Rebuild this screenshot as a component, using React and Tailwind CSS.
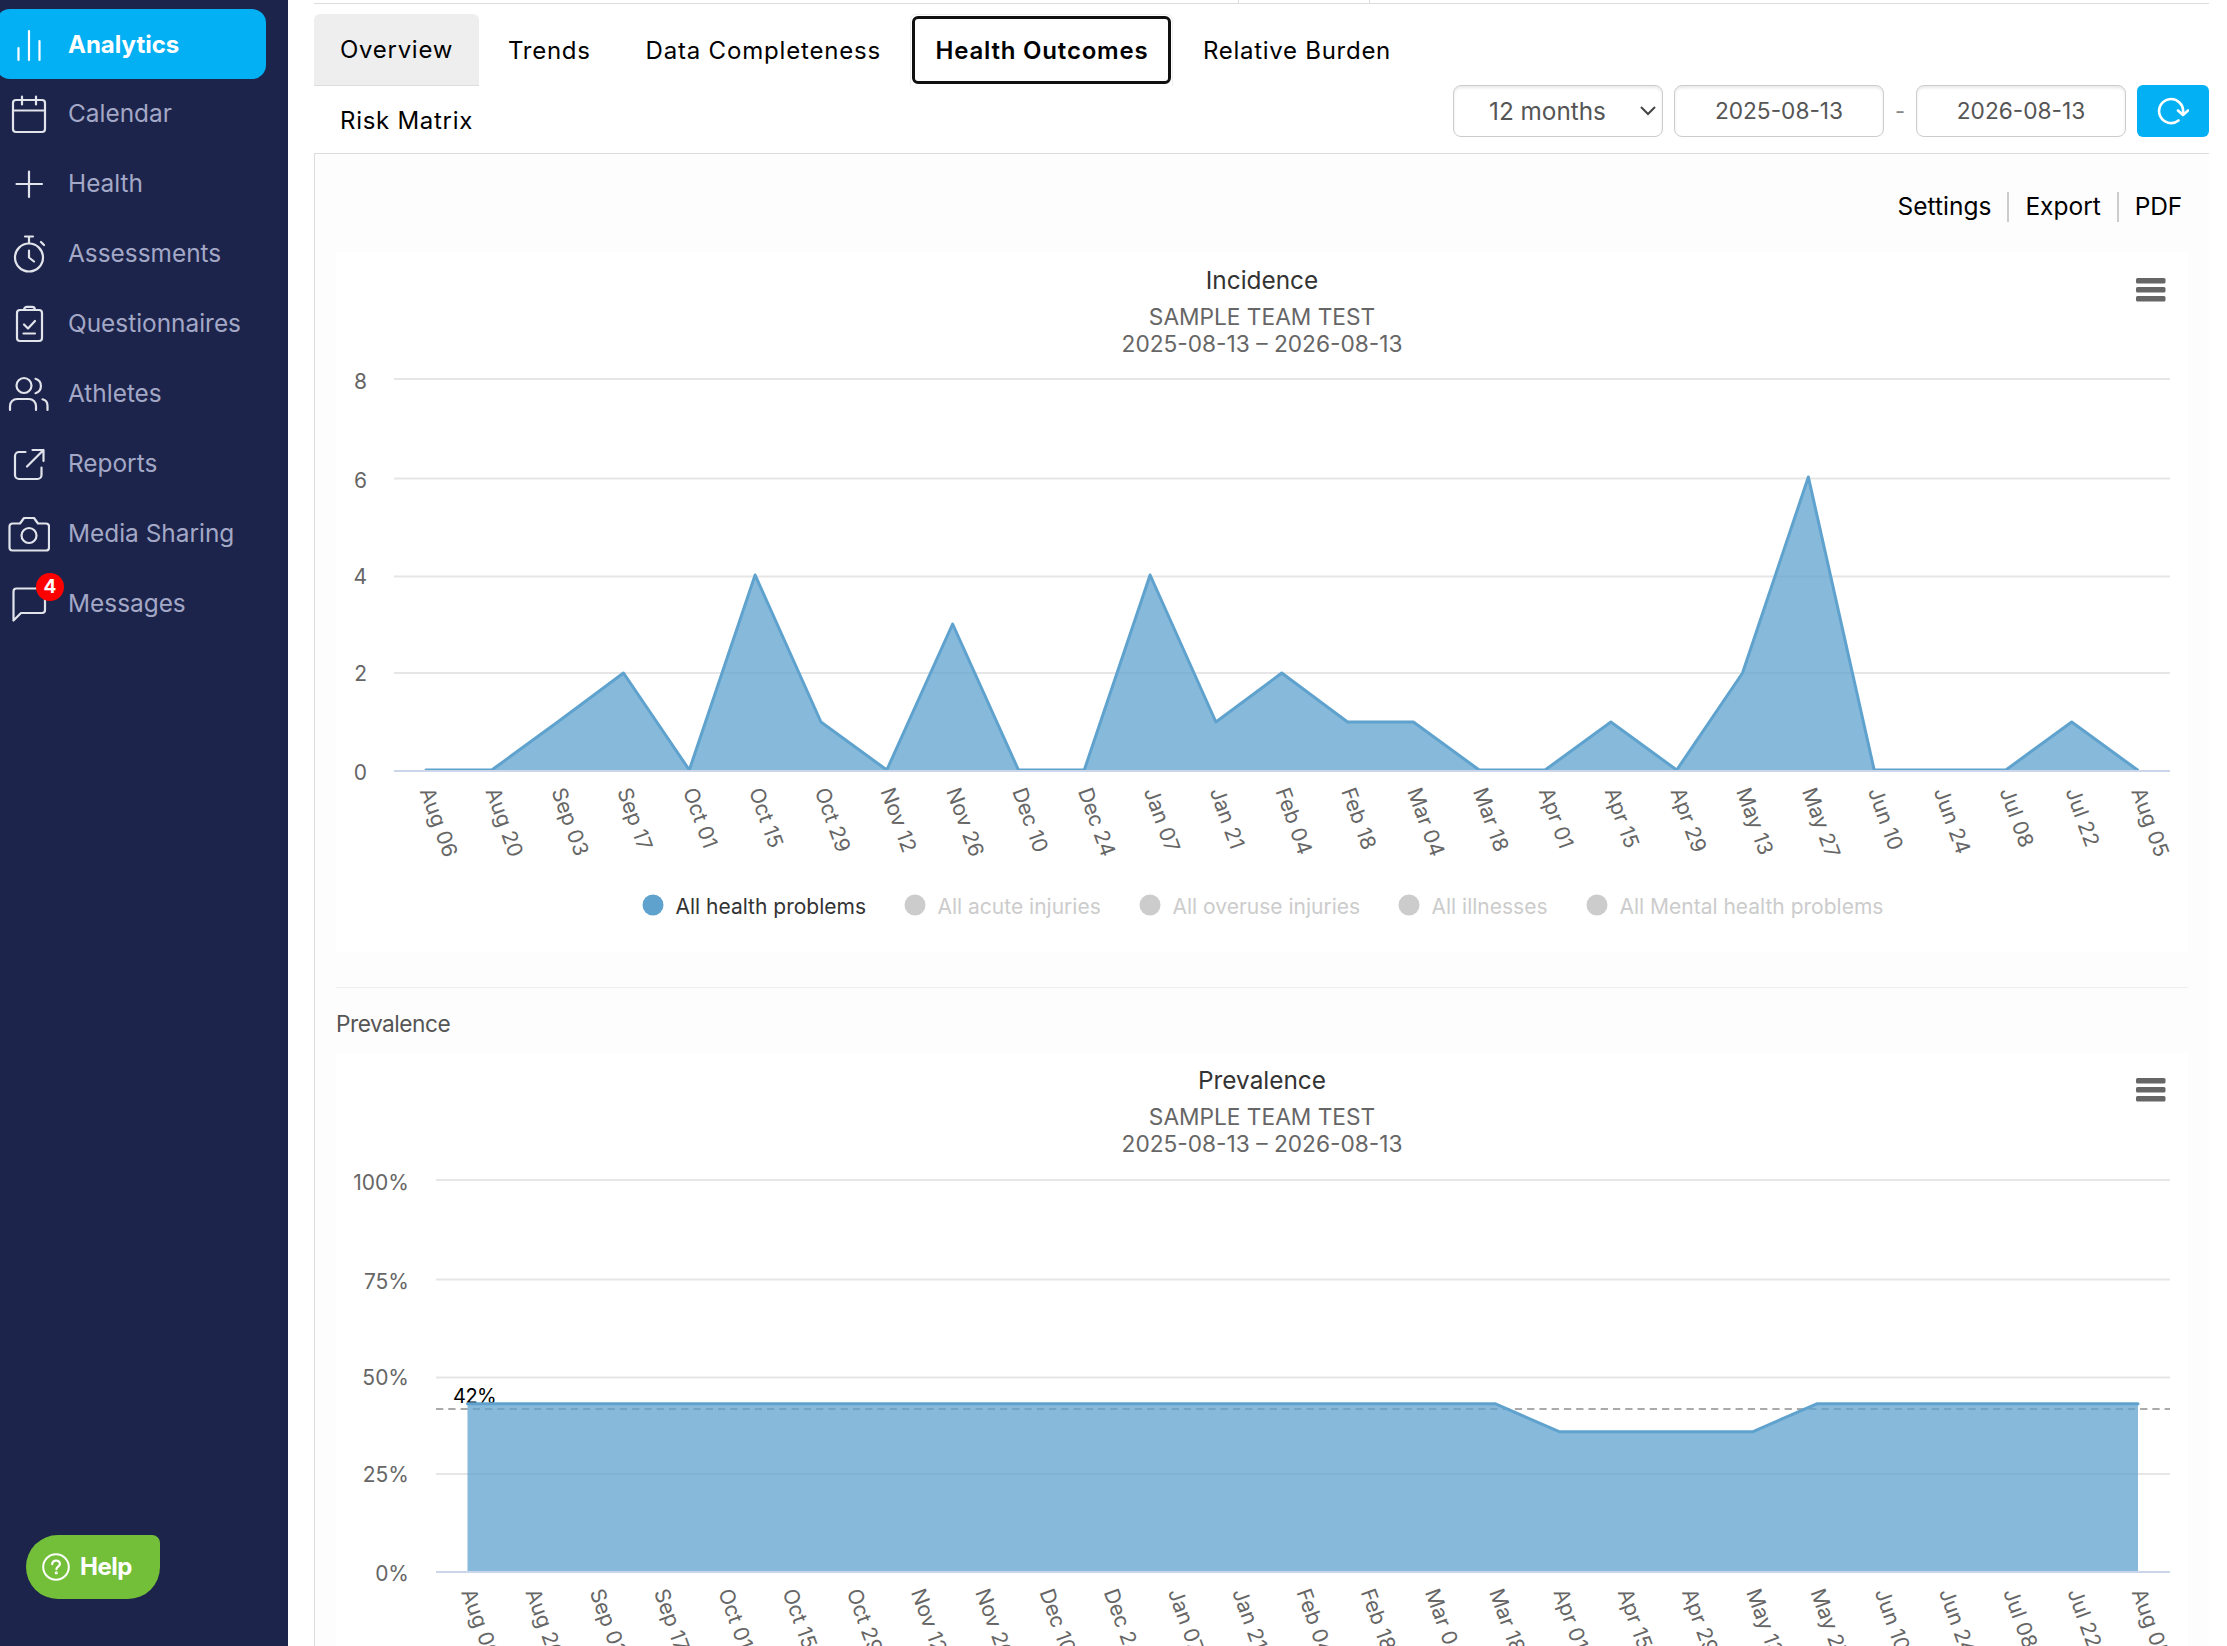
import clsx from "clsx";

const NAV = [
  { id: "analytics", label: "Analytics", active: true },
  { id: "calendar", label: "Calendar" },
  { id: "health", label: "Health" },
  { id: "assessments", label: "Assessments" },
  { id: "questionnaires", label: "Questionnaires" },
  { id: "athletes", label: "Athletes" },
  { id: "reports", label: "Reports" },
  { id: "media", label: "Media Sharing" },
  { id: "messages", label: "Messages", badge: 4 },
];

// all icons share a 42px box
const ICONS = {
  analytics: <path d="M10.5 25v12M21 8v29M31.5 18v19" />,
  calendar: (
    <>
      <rect x="5" y="7" width="32" height="32" rx="3" />
      <path d="M5 17.500h32M14 3.500v8M28 3.500v8" />
    </>
  ),
  health: <path d="M21 8.500v25.500M8.500 21h25.500" />,
  assessments: (
    <>
      <circle cx="21" cy="24.500" r="14" />
      <path d="M21 10V3.500M17 3.500h8M21 17.500v7l5 4M33 9l3 3" />
    </>
  ),
  questionnaires: (
    <>
      <rect x="9" y="7" width="25" height="31" rx="3" />
      <path d="M16 7c0-2 1.200-3.200 3-3.200h5c1.800 0 3 1.200 3 3.200M16 21.500l4 4 7-7.500M15.500 30.500h11.500" />
    </>
  ),
  athletes: (
    <>
      <circle cx="16" cy="12.500" r="7.500" />
      <path d="M2 37v-4a7 7 0 0 1 7-7h12a7 7 0 0 1 7 7V37M27.500 5.800a7.500 7.500 0 0 1 0 14.400M34.500 26.300c3 .7 5 3 5 6.500V37" />
    </>
  ),
  reports: (
    <path d="M17.500 9H11A4 4 0 0 0 7 13v19a4 4 0 0 0 4 4h18.500a4 4 0 0 0 4-4V24.500M24.500 7H35.500V18M35.500 7L19 23.500" />
  ),
  media: (
    <>
      <path d="M4.500 10.500H12l4-5.500h10l4 5.500h8a3 3 0 0 1 3 3v21a3 3 0 0 1-3 3h-33.500a3 3 0 0 1-3-3v-21a3 3 0 0 1 3-3z" />
      <circle cx="21" cy="22.500" r="7.500" />
    </>
  ),
  messages: <path d="M5.500 37.500V8.500a3 3 0 0 1 3-3h25.500a3 3 0 0 1 3 3v18.500a3 3 0 0 1-3 3H13z" />,
};

const TABS = [
  { label: "Overview", cls: "w-[165px] pl-[26px] bg-[#eeeeee] rounded-t-md border-b border-[#dddddd]" },
  { label: "Trends", cls: "w-[137px] pl-[29px]" },
  { label: "Data Completeness", cls: "w-[294px] pl-[29.500px] tracking-[0.820px]" },
  { label: "Health Outcomes", active: true },
  { label: "Relative Burden", cls: "pl-[30px]" },
];

const DATES = [
  "Aug 06", "Aug 20", "Sep 03", "Sep 17", "Oct 01", "Oct 15", "Oct 29", "Nov 12", "Nov 26",
  "Dec 10", "Dec 24", "Jan 07", "Jan 21", "Feb 04", "Feb 18", "Mar 04", "Mar 18", "Apr 01",
  "Apr 15", "Apr 29", "May 13", "May 27", "Jun 10", "Jun 24", "Jul 08", "Jul 22", "Aug 05",
];

const INCIDENCE = [0, 0, 1, 2, 0, 4, 1, 0, 3, 0, 0, 4, 1, 2, 1, 1, 0, 0, 1, 0, 2, 6, 0, 0, 0, 1, 0];
const PREVALENCE = DATES.map((_, i) => (i >= 17 && i <= 20 ? 35.75 : 42.9));

// gridline / label baseline offsets shared by both charts
const GRID = [
  { line: 127, text: 137 },
  { line: 226.5, text: 235.5 },
  { line: 324.5, text: 331.5 },
  { line: 421, text: 429 },
  { line: 519, text: 527.5 },
];

const LEGEND = [
  { label: "All health problems", x: 317, on: true },
  { label: "All acute injuries", x: 579 },
  { label: "All overuse injuries", x: 814 },
  { label: "All illnesses", x: 1073 },
  { label: "All Mental health problems", x: 1261 },
];

function Sidebar() {
  return (
    <aside className="flex w-[288px] shrink-0 flex-col justify-between overflow-hidden bg-[#1d244b] pt-[9px]">
      <nav className="-ml-1">
        {NAV.map((item) => (
          <a
            key={item.id}
            className={clsx(
              "flex h-[70px] items-center gap-[18px]",
              item.active
                ? "w-[270px] rounded-[14px] bg-[#03b0f3] text-[24px] font-bold text-white"
                : "text-[24.400px] text-[#a3a8c6]"
            )}
          >
            <span className="relative ml-[12px] h-[42px] w-[42px]">
              <svg
                viewBox="0 0 42 42"
                className={clsx(
                  "h-[42px] w-[42px] fill-none stroke-[2.2]",
                  item.active ? "stroke-white" : "stroke-[#e1e4ea]"
                )}
                strokeLinecap="round"
                strokeLinejoin="round"
              >
                {ICONS[item.id]}
              </svg>
              {item.badge && (
                <span className="absolute -top-[10px] left-[28px] flex h-7 w-7 items-center justify-center rounded-full bg-[#ff0000] text-[19px] font-bold text-white">
                  {item.badge}
                </span>
              )}
            </span>
            <span className={item.active ? "pt-[2px]" : "pb-px"}>{item.label}</span>
          </a>
        ))}
      </nav>
      <button className="mb-[47px] ml-[26px] flex h-16 w-[134px] items-center gap-[10px] rounded-[32px] rounded-tr-[8px] bg-[#73bf39] pl-[16px] text-[24px] font-bold text-white">
        <svg viewBox="0 0 28 28" className="h-7 w-7 fill-none stroke-white stroke-2" strokeLinecap="round">
          <circle cx="14" cy="14" r="12.8" />
          <path d="M10.200 11.200c0-2.200 1.600-3.600 3.800-3.600s3.900 1.400 3.900 3.400c0 2.600-3.500 2.800-3.500 5.200" strokeWidth="2.200" />
          <circle cx="14.300" cy="19.800" r=".6" />
        </svg>
        <span className="tracking-[-0.5px]">Help</span>
      </button>
    </aside>
  );
}

function Filters() {
  const field =
    "flex h-[52px] w-[210px] items-center rounded-[8px] border-[1.500px] border-[#cccccc] bg-white text-[#555555] shadow-[inset_0_2px_3px_rgba(0,0,0,0.09)]";
  return (
    <div className="flex items-start pt-[81px] pr-[18px]">
      <div className={clsx(field, "justify-between pr-[6px] pl-[35px] text-[24.300px]")}>
        <span>12 months</span>
        <svg viewBox="0 0 16 10" className="h-[10px] w-4 fill-none stroke-[#444444] stroke-2">
          <path d="M1 1l7 7 7-7" />
        </svg>
      </div>
      <div className={clsx(field, "ml-[11px] justify-center text-[22.700px]")}>2025-08-13</div>
      <span className="w-8 text-center text-[22px] leading-[52px] text-[#888888]">-</span>
      <div className={clsx(field, "justify-center text-[22.700px]")}>2026-08-13</div>
      <button className="ml-[11px] flex h-[52px] w-[72px] items-center justify-center rounded-[6px] bg-[#03b0f3]">
        <svg viewBox="0 0 32 28" className="h-7 w-8 fill-none stroke-white stroke-[2.600]" strokeLinecap="round" strokeLinejoin="round">
          <path d="M21.500 23.500A12 12 0 1 1 26 15.500" />
          <path d="M21 13.500l5 4.500 5-4.500" />
        </svg>
      </button>
    </div>
  );
}

// coordinates are relative to the 1852px wide card
function AreaChart({ title, data, labels, left, first, last, max, plotLine, legend, headerY = 0 }) {
  const top = GRID[0].line;
  const bottom = GRID[4].line;
  const step = (last - first) / (data.length - 1);
  const y = (v) => bottom - (v / max) * (bottom - top);
  const points = data.map((v, i) => `${first + i * step},${y(v) - (v === 0 ? 1 : 0)}`).join(" ");
  return (
    <svg width="1852" height="700" className="block bg-white text-[21px]" fill="#666666">
      <g transform={`translate(0 ${headerY})`}>
        <text x="926" y="37" textAnchor="middle" fontSize="24.400" fill="#333333">{title}</text>
        <text x="926" y="73" textAnchor="middle" fontSize="22.700">SAMPLE TEAM TEST</text>
        <text x="926" y="100" textAnchor="middle" fontSize="22.700">2025-08-13 – 2026-08-13</text>
        {[28.5, 37.5, 46.5].map((by) => (
          <rect key={by} x="1800" y={by - 2.5} width="29.500" height="5.500" rx="1.500" />
        ))}
      </g>

      {GRID.map((g, i) => (
        <g key={g.line}>
          <line x1={left} x2="1834" y1={g.line} y2={g.line} stroke="#e6e6e6" strokeWidth="2" />
          <text x={left - 27} y={g.text} textAnchor="end">{labels[i]}</text>
        </g>
      ))}
      {plotLine && (
        <>
          <line x1={left} x2="1834" y1={plotLine.y} y2={plotLine.y} stroke="#aaaaaa" strokeWidth="2" strokeDasharray="7.260 5" />
          <text x={left + 17} y={plotLine.y - 6} fill="#000000" fontSize="20" letterSpacing="-0.5">{plotLine.label}</text>
        </>
      )}
      <polygon points={`${first},${bottom} ${points} ${last},${bottom}`} fill="#5fa2ce" fillOpacity="0.75" />
      <polyline points={points} fill="none" stroke="#5fa2ce" strokeWidth="3" strokeLinejoin="round" strokeLinecap="round" />
      <line x1={left} x2="1834" y1={bottom} y2={bottom} stroke="#ccd6eb" strokeWidth="2" />

      {DATES.map((d, i) => {
        const x = first + i * step - 6.5;
        return (
          <text key={d} x={x} y={bottom + 20} transform={`rotate(70 ${x} ${bottom + 20})`}>{d}</text>
        );
      })}

      {legend &&
        LEGEND.map((l) => (
          <g key={l.label} fill={l.on ? "#5fa2ce" : "#cccccc"}>
            <circle cx={l.x} cy="653" r="10.500" />
            <text x={l.x + 22.500} y="662" fill={l.on ? "#333333" : "#cccccc"}>{l.label}</text>
          </g>
        ))}
    </svg>
  );
}

export default function App() {
  return (
    <div className="flex h-[1646px] w-[2227px] overflow-hidden bg-white font-['Inter',sans-serif]">
      <Sidebar />
      <main className="ml-[26px] flex w-[1913px] shrink-0 flex-col">
        <div className="flex h-[3px] w-[1895px] shrink-0">
          <span className="ml-[924px] w-[132px] border-x border-[#dddddd]" />
        </div>
        <header className="flex h-[150px] w-[1895px] shrink-0 justify-between border-t border-[#dddddd]">
          <div className="pt-[10px] text-[24px] tracking-[0.720px] text-black">
            <div className="flex h-[72px]">
              {TABS.map((t) =>
                t.active ? (
                  <div key={t.label} className="flex w-[263px] rounded-t-md border-x border-t border-[#eeeeee] p-px">
                    <div className="flex h-[68px] w-[260px] items-center justify-center rounded-[6px] border-[3px] border-[#101010] pt-px pl-px font-semibold tracking-[0.800px]">
                      {t.label}
                    </div>
                  </div>
                ) : (
                  <div key={t.label} className={clsx("flex items-center pt-px", t.cls)}>{t.label}</div>
                )
              )}
            </div>
            <div className="pt-[17px] pl-[26px]">Risk Matrix</div>
          </div>
          <div className="-mr-[18px]">
            <Filters />
          </div>
        </header>

        <section className="w-[1895px] grow border-t border-l border-[#dddddd] bg-[#fdfdfd] pl-[21px]">
          <div className="flex h-[98px] items-center justify-end pt-[7px] pr-[27px] text-[24.500px] text-black">
            <span>Settings</span>
            <span className="mr-[16px] ml-[16px] h-[30px] w-[2px] bg-[#cccccc]" />
            <span>Export</span>
            <span className="mr-[16px] ml-[16px] h-[30px] w-[2px] bg-[#cccccc]" />
            <span className="tracking-[-0.200px]">PDF</span>
          </div>
          <AreaChart
            title="Incidence"
            data={INCIDENCE}
            labels={["8", "6", "4", "2", "0"]}
            left={58}
            first={90}
            last={1801.5}
            max={8}
            legend
          />
          <div className="mt-[35px] w-[1852px] border-t border-[#eeeeee] pt-[19px] text-[22.700px] leading-[34px] tracking-[-0.500px] text-[#555555]">
            Prevalence
          </div>
          <div className="mt-[12px]">
            <AreaChart
              title="Prevalence"
              data={PREVALENCE}
              labels={["100%", "75%", "50%", "25%", "0%"]}
              left={100}
              first={131.5}
              last={1802}
              max={100}
              headerY={-1}
              plotLine={{ y: 356, label: "42%" }}
            />
          </div>
        </section>
      </main>
    </div>
  );
}
